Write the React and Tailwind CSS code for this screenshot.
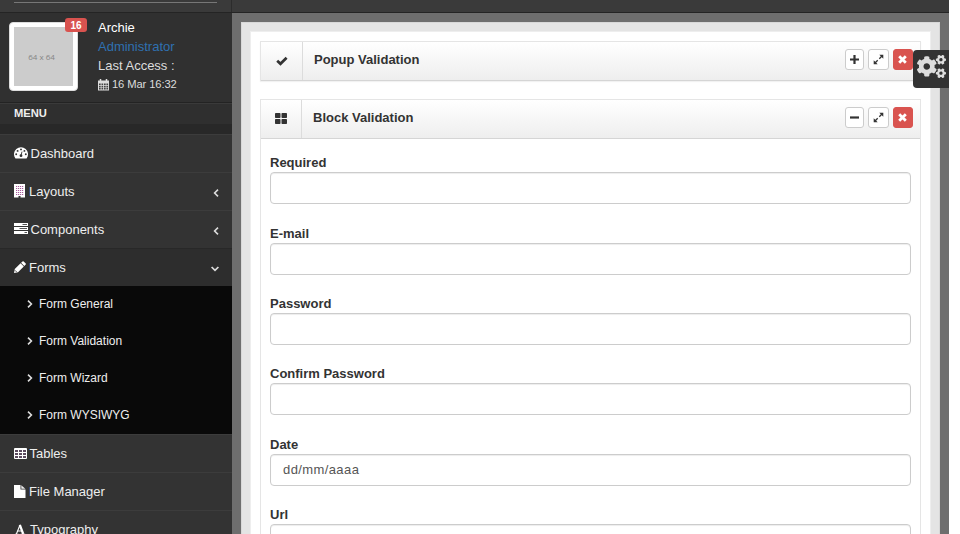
import React from "react";
import { FaCogs } from "react-icons/fa";

function DashboardIcon() {
  return (
    <svg width="14" height="12" viewBox="0 0 14 12">
      <path d="M1.300 11.200A7 7 0 1 1 12.700 11.200q-.2.300-.6.300H1.900q-.4 0-.6-.3z" fill="#fff" />
      <g fill="#333">
        <circle cx="2.200" cy="7.200" r=".95" />
        <circle cx="3.600" cy="3.900" r=".95" />
        <circle cx="7" cy="2.400" r=".95" />
        <circle cx="10.400" cy="3.900" r=".95" />
        <circle cx="11.800" cy="7.200" r=".95" />
        <circle cx="7" cy="8.700" r="1.400" />
      </g>
      <path d="M7 8.700L8 4.600" stroke="#333" strokeWidth=".9" />
    </svg>
  );
}

function BuildingIcon() {
  return (
    <svg width="11" height="14" viewBox="0 0 11 14">
      <path d="M0 0h11v13.500H6.500v-1.500H4.500v1.500H0z" fill="#fff" />
      <path d="M2 2.500h7.400M2 4.500h7.400M2 6.500h7.400M2 8.500h7.400M2 10.500h7.400" stroke="#a85a9c" strokeWidth="1" strokeDasharray="1.200 .8" />
    </svg>
  );
}

function TasksIcon() {
  return (
    <svg width="14" height="12" viewBox="0 0 14 12">
      <path d="M0 0h14v3H0zM0 4h14v3H0zM0 8h14v3H0z" fill="#fff" />
      <path d="M8.500 1.500H13M5.500 5.500H13M10.500 9.500H13" stroke="#555" strokeWidth="1" />
    </svg>
  );
}

function PencilIcon() {
  return (
    <svg width="12" height="12" viewBox="0 0 12 12">
      <path d="M0 12l.8-3.900L6.600 2.300l3.200 3.200L4 11.300zM7.100 1.800L8.500.4q.6-.5 1.200 0l2 2q.5.600 0 1.200l-1.400 1.400z" fill="#fff" />
      <path d="M1 9.300l1.800 1.800" stroke="#2d2d2d" strokeWidth=".8" />
    </svg>
  );
}

function TableIcon() {
  return (
    <svg width="13" height="11" viewBox="0 0 13 11">
      <rect width="13" height="11" rx="1" fill="#fff" />
      <path d="M1 2h3v2H1zM5 2h3v2H5zM9 2h3v2H9zM1 5h3v2H1zM5 5h3v2H5zM9 5h3v2H9zM1 8h3v2H1zM5 8h3v2H5zM9 8h3v2H9z" fill="#5b4a5e" />
    </svg>
  );
}

function FileIcon() {
  return (
    <svg width="12" height="13" viewBox="0 0 12 13">
      <path d="M0 0h6.500v4.500H11.500V13H0z" fill="#fff" />
      <path d="M7.300.2L11.300 3.800H7.300z" fill="#eee" />
    </svg>
  );
}

function FontIcon() {
  return (
    <svg width="12" height="11" viewBox="0 0 12 11" fill="none" stroke="#fff">
      <path d="M2.400 10L6 1" strokeWidth="1.100" />
      <path d="M5.800 .8L9.200 10" strokeWidth="2.300" />
      <path d="M3.600 7h4.600M1 10.300h3.400M6.700 10.300h4.500" strokeWidth="1.100" />
    </svg>
  );
}

function CalendarIcon() {
  return (
    <svg width="11" height="12" viewBox="0 0 11 12">
      <path d="M0 1.500h11v10H0z" fill="#ddd" />
      <path d="M2.500 0v3.200M8.500 0v3.200" stroke="#ddd" strokeWidth="1.500" />
      <path d="M1 4.500h1.700v1.600H1zM3.500 4.500h1.700v1.600H3.500zM6 4.500h1.700v1.600H6zM8.400 4.500h1.700v1.600H8.400zM1 6.800h1.700v1.600H1zM3.500 6.800h1.700v1.600H3.500zM6 6.800h1.700v1.600H6zM8.400 6.800h1.700v1.600H8.400zM1 9.100h1.700v1.500H1zM3.500 9.100h1.700v1.500H3.500zM6 9.100h1.700v1.500H6zM8.400 9.100h1.700v1.500H8.400z" fill="#444" />
    </svg>
  );
}

function Chevron({ dir }) {
  if (dir === "down")
    return (
      <svg width="8" height="6" viewBox="0 0 8 6" fill="none" stroke="#ddd" strokeWidth="1.700">
        <path d="M.6 1L4 4.400 7.400 1" />
      </svg>
    );
  return (
    <svg width="6" height="8" viewBox="0 0 6 8" fill="none" stroke="#ddd" strokeWidth="1.600">
      <path d={dir === "left" ? "M5 .6L1.600 4 5 7.400" : "M1 .6L4.400 4 1 7.400"} />
    </svg>
  );
}

function NavItem({ icon, label, dir, gap, active }) {
  return (
    <div
      className={
        "flex h-[38px] shrink-0 items-center border-t pr-[13px] pl-[14px] text-[13px] text-[#eee] " +
        (active ? "border-[#282828] bg-[#2d2d2d]" : "border-[#3c3c3c] bg-[#333]")
      }
    >
      <span className="pb-px">{icon}</span>
      <span className={gap}>{label}</span>
      {dir && (
        <span className="mt-[2px] ml-auto">
          <Chevron dir={dir} />
        </span>
      )}
    </div>
  );
}

function Sidebar() {
  return (
    <aside className="flex w-[232px] shrink-0 flex-col bg-[#333]">
      <div className="flex h-[90px] shrink-0 border-b border-[#232323] bg-[#303030] pl-[9px]">
        <div className="relative mt-[9px] h-[69px] w-[69px] rounded-[4px] border border-[#ddd] bg-white p-1">
          <div className="flex h-full items-center justify-center bg-[#ccc] pr-1 font-['Open_Sans','Noto_Sans',sans-serif] text-[8px] text-[#858585]">
            64 x 64
          </div>
          <span className="absolute -top-[5px] left-[55px] flex h-[14px] w-[22px] items-center justify-center rounded-[3px] bg-[#d9534f] text-[10px] font-bold text-white">
            16
          </span>
        </div>
        <div className="ml-5 pt-[5px] text-[13px] leading-[19px] text-[#ddd]">
          <div className="text-white">Archie</div>
          <div className="text-[#2f70b1]">Administrator</div>
          <div>Last Access :</div>
          <div className="flex items-center gap-[3px] text-[11.200px] tracking-[-0.1px]">
            <CalendarIcon />
            16 Mar 16:32
          </div>
        </div>
      </div>
      <div className="h-[21px] shrink-0 border-t border-[#3a3a3a] bg-[#2f2f2f] pl-[14px] text-[11.200px] leading-[19px] font-bold text-[#eee]">MENU</div>
      <div className="h-[10px] shrink-0 bg-[#282828]" />
      <NavItem icon={<DashboardIcon />} label="Dashboard" gap="ml-[2.500px]" />
      <NavItem icon={<BuildingIcon />} label="Layouts" gap="ml-1" dir="left" />
      <NavItem icon={<TasksIcon />} label="Components" gap="ml-[2.500px]" dir="left" />
      <NavItem icon={<PencilIcon />} label="Forms" gap="ml-[3px]" dir="down" active />
      <div className="flex h-[148px] shrink-0 flex-col bg-[#090909] text-[12px] text-[#eee]">
        {["Form General", "Form Validation", "Form Wizard", "Form WYSIWYG"].map((t) => (
          <div key={t} className="flex h-[37px] items-center gap-[6px] pb-[2px] pl-[27px]">
            <Chevron dir="right" />
            {t}
          </div>
        ))}
      </div>
      <NavItem icon={<TableIcon />} label="Tables" gap="ml-[2.500px]" />
      <NavItem icon={<FileIcon />} label="File Manager" gap="ml-[3px]" />
      <NavItem icon={<FontIcon />} label="Typography" gap="ml-1" />
    </aside>
  );
}

function ToolButton({ kind }) {
  const close = kind === "close";
  return (
    <button
      className={
        "flex h-[21px] items-center justify-center rounded-[3px] border " +
        (kind === "expand" ? "w-[21px] " : kind === "close" ? "w-5 pr-px " : "w-[19px] ") +
        (close ? "border-[#d9534f] bg-[#d9534f]" : "border-[#ccc] bg-white")
      }
    >
      <svg width="11" height="11" viewBox="0 0 11 11" className="shrink-0">
        {kind === "plus" && <path d="M1 5.500h9M5.500 1v9" stroke="#333" strokeWidth="2.200" />}
        {kind === "minus" && <path d="M1 5.500h9" stroke="#333" strokeWidth="2.200" />}
        {kind === "expand" && (
          <>
            <path d="M6.300 4.700L9 2M4.700 6.300L2 9" stroke="#333" strokeWidth="1.300" />
            <path d="M6.300.8h4v4zM.7 6.200v4h4z" fill="#333" />
          </>
        )}
        {close && <path d="M2.200 2.200l6.600 6.600M8.800 2.200L2.200 8.800" stroke="#fff" strokeWidth="2.800" />}
      </svg>
    </button>
  );
}

function BoxHeader({ title, icon, first, cell }) {
  return (
    <header className="flex h-[39px] items-stretch border-b border-[#d5d5d5] bg-linear-to-b from-white to-[#eee]">
      <div className={"flex items-center justify-center border-r border-[#dcdcdc] pb-px " + cell}>{icon}</div>
      <h5 className="ml-[11px] text-[13px] leading-[36px] font-bold text-[#333]">{title}</h5>
      <div className="mt-[7px] mr-[7px] ml-auto flex gap-1">
        <ToolButton kind={first ? "plus" : "minus"} />
        <ToolButton kind="expand" />
        <ToolButton kind="close" />
      </div>
    </header>
  );
}

function Field({ label, value }) {
  return (
    <div className="h-[70.400px] shrink-0">
      <label className="block h-[18px] text-[13px] leading-[18.500px] font-bold text-[#333]">{label}</label>
      <div className="flex h-[32px] items-center rounded-[4px] border border-[#ccc] bg-white px-3 text-[13px] tracking-[0.4px] text-[#555] shadow-[inset_0_1px_1px_rgba(0,0,0,0.075)]">
        {value}
      </div>
    </div>
  );
}

export default function App() {
  return (
    <div className="relative flex h-[534px] w-[960px] flex-col overflow-hidden bg-white font-['Liberation_Sans',Arial,sans-serif]">
      <div className="flex h-[13px] w-[949px] shrink-0 border-b border-[#242424] bg-[#3a3a3a]">
        <div className="w-[232px] border-r border-[#2c2c2c] pt-[2px] pr-[14px] pl-[14px]">
          <div className="h-px bg-[#777]" />
        </div>
      </div>
      <div className="flex h-[521px] w-[949px]">
        <Sidebar />
        <main className="flex-1 bg-[#6e6e6e] pt-[9px] pr-[9px] pl-[9px]">
          <div className="h-[600px] border border-[#d8d8d8] bg-[#e4e4e4] p-2">
            <div className="h-full border border-[#eee] bg-white px-[9px] pt-[9px]">
              <section className="border border-b-0 border-[#e5e5e5] shadow-[0_1px_1px_rgba(0,0,0,0.05)]">
                <BoxHeader
                  first
                  title="Popup Validation"
                  cell="w-[42px]"
                  icon={
                    <svg width="12" height="10" viewBox="0 0 12 10">
                      <path d="M1.200 4.700l3.300 3.100 6.100-6" fill="none" stroke="#333" strokeWidth="2.700" />
                    </svg>
                  }
                />
              </section>
              <section className="mt-[18px] h-[480px] border border-[#e5e5e5]">
                <BoxHeader
                  title="Block Validation"
                  cell="w-[41px]"
                  icon={
                    <svg width="12" height="11" viewBox="0 0 12 11">
                      <g fill="#333">
                        <rect x="0" y="0" width="5.500" height="5" rx=".7" />
                        <rect x="6.500" y="0" width="5.500" height="5" rx=".7" />
                        <rect x="0" y="6" width="5.500" height="5" rx=".7" />
                        <rect x="6.500" y="6" width="5.500" height="5" rx=".7" />
                      </g>
                    </svg>
                  }
                />
                <div className="flex flex-col px-[9px] pt-[15.200px]">
                  <Field label="Required" />
                  <Field label="E-mail" />
                  <Field label="Password" />
                  <Field label="Confirm Password" />
                  <Field label="Date" value="dd/mm/aaaa" />
                  <Field label="Url" />
                </div>
              </section>
            </div>
          </div>
        </main>
      </div>
      <div className="absolute top-[50px] left-[913px] flex h-[38px] w-[36px] justify-center rounded-l-[4px] bg-[#333] pt-[2px]">
        <FaCogs size={29} color="#ddd" />
      </div>
    </div>
  );
}
